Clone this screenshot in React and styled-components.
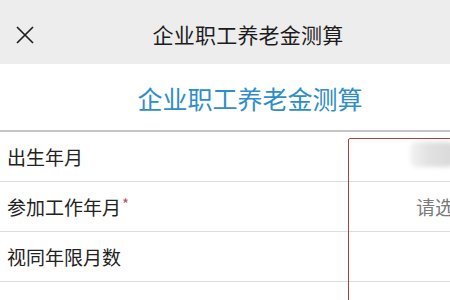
import React from "react";
import styled, { createGlobalStyle } from "styled-components";

const Global = createGlobalStyle`
  html, body {
    margin: 0;
    padding: 0;
    background: #fff;
    font-family: "Noto Sans CJK SC", "Liberation Sans", sans-serif;
  }
`;

const Page = styled.div`
  position: relative;
  width: 450px;
  height: 300px;
  overflow: hidden;
  background: #fff;
`;

const TopBar = styled.div`
  position: relative;
  height: 64px;
  background: #ededed;
  display: flex;
  align-items: center;
  justify-content: center;
`;

const Close = styled.div`
  position: absolute;
  left: 14px;
  top: 24px;
  width: 22px;
  height: 22px;
`;

const BarTitle = styled.div`
  font-size: 21px;
  color: #1c1c1c;
  margin-left: 46px;
  margin-top: 4px;
  letter-spacing: 0.2px;
`;

const Banner = styled.div`
  display: flex;
  align-items: center;
  justify-content: center;
  border-bottom: 2px solid #c4c4c4;
  box-sizing: border-box;
  height: 68px;
`;

const BannerTitle = styled.div`
  font-size: 25px;
  color: #2f8ec7;
  margin-left: 50px;
  margin-top: 2px;
`;

const Row = styled.div`
  display: flex;
  align-items: center;
  justify-content: space-between;
  border-bottom: 1px solid #dcdcdc;
  padding-left: 7px;
  box-sizing: border-box;
  height: 50px;
`;

const Label = styled.div`
  font-size: 19px;
  color: ${(p) => (p.faint ? "#ececec" : "#222")};
  filter: ${(p) => (p.faint ? "blur(1px)" : "none")};
  margin-top: ${(p) => (p.faint ? "26px" : "0")};
`;

const Star = styled.span`
  color: #c0506a;
  font-size: 15px;
  vertical-align: top;
  margin-left: 1px;
`;

const Hint = styled.div`
  font-size: 19px;
  color: #7a7a7a;
  margin-right: -23px;
  white-space: nowrap;
  margin-top: ${(p) => (p.low ? "30px" : "0")};
  opacity: ${(p) => (p.low ? 0.5 : 1)};
`;

const Blur = styled.div`
  width: 44px;
  height: 25px;
  margin-right: -4px;
  margin-top: -4px;
  background: linear-gradient(90deg, #f3f3f3 0%, #e2e2e2 40%, #d9d9d9 100%);
  filter: blur(2px);
  border-radius: 6px;
`;

const RedBox = styled.div`
  position: absolute;
  left: 348px;
  top: 138px;
  width: 120px;
  height: 200px;
  border: 1.5px solid #a8433a;
  border-radius: 2px;
`;

export default function App() {
  return (
    <Page>
      <Global />
      <TopBar>
        <Close>
          <svg width="22" height="22" viewBox="0 0 22 22">
            <path d="M3 3 L19 19 M19 3 L3 19" stroke="#1f1f1f" strokeWidth="1.7" fill="none" />
          </svg>
        </Close>
        <BarTitle>企业职工养老金测算</BarTitle>
      </TopBar>
      <Banner>
        <BannerTitle>企业职工养老金测算</BannerTitle>
      </Banner>
      <Row>
        <Label>出生年月</Label>
        <Blur />
      </Row>
      <Row>
        <Label>
          参加工作年月<Star>*</Star>
        </Label>
        <Hint>请选择</Hint>
      </Row>
      <Row>
        <Label>视同年限月数</Label>
      </Row>
      <Row>
        <Label faint>实际缴费年限月数</Label>
        <Hint low>请选择</Hint>
      </Row>
      <RedBox />
    </Page>
  );
}
